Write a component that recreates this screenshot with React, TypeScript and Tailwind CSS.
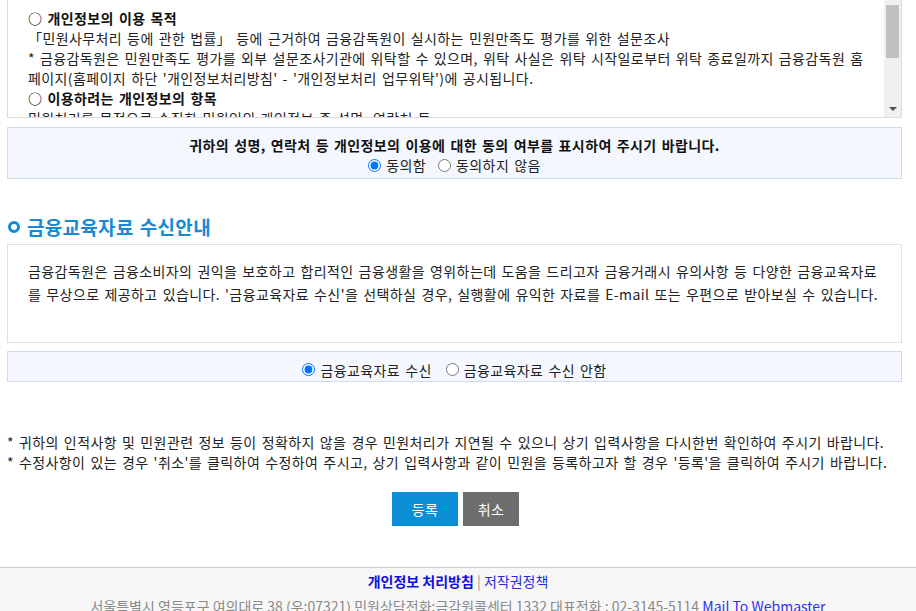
const font = { fontFamily: '"Noto Sans CJK KR", "Noto Sans", sans-serif' };

function Radio({ name, checked, label }: { name: string; checked?: boolean; label: string }) {
  return (
    <label className="inline-flex items-center gap-[5px]">
      <input
        type="radio"
        name={name}
        defaultChecked={checked}
        className="m-0 h-[13px] w-[13px] accent-[#0075ff]"
      />
      <span>{label}</span>
    </label>
  );
}

export default function App() {
  return (
    <div className="min-h-screen bg-white text-[14px] leading-[20px] text-[#222]" style={font}>
      <div className="pl-[7px] pr-[14px] tracking-[0.4px] [word-spacing:1.5px]">
        {/* 개인정보 이용 안내 (스크롤 박스) */}
        <div className="flex h-[118px] overflow-hidden border border-t-0 border-[#dcdcdc]">
          <div className="flex-1 overflow-hidden pl-[20px] pr-[16px] pt-[8px]">
            <p className="font-bold text-[#111]">○ 개인정보의 이용 목적</p>
            <p>「민원사무처리 등에 관한 법률」 등에 근거하여 금융감독원이 실시하는 민원만족도 평가를 위한 설문조사</p>
            <p>
              * 금융감독원은 민원만족도 평가를 외부 설문조사기관에 위탁할 수 있으며, 위탁 사실은 위탁 시작일로부터 위탁 종료일까지 금융감독원 홈페이지(홈페이지 하단 '개인정보처리방침' - '개인정보처리 업무위탁')에 공시됩니다.
            </p>
            <p className="font-bold text-[#111]">○ 이용하려는 개인정보의 항목</p>
            <p>민원처리를 목적으로 수집한 민원인의 개인정보 중 성명, 연락처 등</p>
          </div>
          <div className="flex w-[17px] flex-col items-center bg-[#f0f0f0]">
            <div className="mt-[5px] h-[53px] w-[13px] bg-[#c1c1c1]" />
            <div className="mt-auto mb-[6px] h-0 w-0 border-x-[4px] border-t-[4px] border-x-transparent border-t-[#505050]" />
          </div>
        </div>

        {/* 동의 여부 */}
        <div className="mt-[9px] flex flex-col items-center border border-[#cfdcee] bg-[#f4f8fe] pt-[7px] pb-[3px]">
          <p className="font-bold text-[#111]">귀하의 성명, 연락처 등 개인정보의 이용에 대한 동의 여부를 표시하여 주시기 바랍니다.</p>
          <div className="flex gap-[12px]">
            <Radio name="agree" checked label="동의함" />
            <Radio name="agree" label="동의하지 않음" />
          </div>
        </div>

        {/* 금융교육자료 수신안내 */}
        <h2 className="mt-[34px] flex items-center gap-[7px] text-[19px] leading-[28px] font-bold tracking-[0.3px] text-[#168ad3]">
          <span className="ml-[1px] h-[12px] w-[12px] rounded-full border-[3px] border-[#168ad3]" />
          금융교육자료 수신안내
        </h2>
        <div className="mt-[3px] h-[99px] border border-[#e0e0e0] pl-[20px] pr-[14px] pt-[15px] leading-[23px]">
          <p>
            금융감독원은 금융소비자의 권익을 보호하고 합리적인 금융생활을 영위하는데 도움을 드리고자 금융거래시 유의사항 등 다양한 금융교육자료를 무상으로 제공하고 있습니다. '금융교육자료 수신'을 선택하실 경우, 실행활에 유익한 자료를 E-mail 또는 우편으로 받아보실 수 있습니다.
          </p>
        </div>
        <div className="mt-[8px] flex h-[31px] items-center justify-center gap-[14px] border border-[#cfdcee] bg-[#f4f8fe] pt-[6px]">
          <Radio name="edu" checked label="금융교육자료 수신" />
          <Radio name="edu" label="금융교육자료 수신 안함" />
        </div>

        {/* 안내 문구 */}
        <div className="mt-[50px]">
          <p>* 귀하의 인적사항 및 민원관련 정보 등이 정확하지 않을 경우 민원처리가 지연될 수 있으니 상기 입력사항을 다시한번 확인하여 주시기 바랍니다.</p>
          <p>* 수정사항이 있는 경우 '취소'를 클릭하여 수정하여 주시고, 상기 입력사항과 같이 민원을 등록하고자 할 경우 '등록'을 클릭하여 주시기 바랍니다.</p>
        </div>

        <div className="mt-[20px] flex justify-center gap-[5px] pl-[2px]">
          <button className="h-[34px] w-[66px] bg-[#0a8fd7] text-[14px] text-white">등록</button>
          <button className="h-[34px] w-[56px] bg-[#6e6e6e] text-[14px] text-white">취소</button>
        </div>
      </div>

      {/* footer */}
      <footer className="mt-[41px] border-t border-[#cccccc] bg-[#f7f7f7] pt-[2px] pb-[10px] text-center text-[14px]">
        <p className="leading-[22px]">
          <a className="font-bold text-[#1010dd]">개인정보 처리방침</a>
          <span className="text-[#999]"> | </span>
          <a className="text-[#2a2ae0]">저작권정책</a>
        </p>
        <p className="mt-[3px] leading-[22px] text-[#8a8a8a]">
          서울특별시 영등포구 여의대로 38 (우:07321) 민원상담전화:금감원콜센터 1332 대표전화 : 02-3145-5114{' '}
          <a className="text-[#3030ee]">Mail To Webmaster</a>
        </p>
      </footer>
    </div>
  );
}
